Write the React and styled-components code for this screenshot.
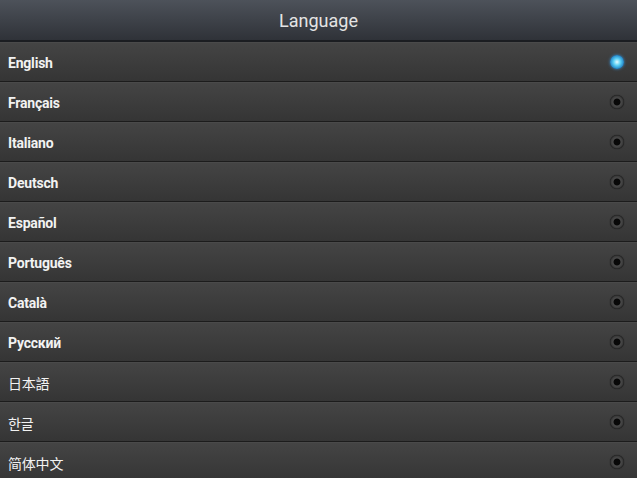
import styled, { createGlobalStyle } from "styled-components"

const GlobalStyle = createGlobalStyle`
  html, body {
    margin: 0;
    padding: 0;
    background: #2b2b2b;
    overflow: hidden;
  }
`

const languages = [
  "English",
  "Français",
  "Italiano",
  "Deutsch",
  "Español",
  "Português",
  "Català",
  "Русский",
  "日本語",
  "한글",
  "简体中文",
]

const Screen = styled.div`
  width: 637px;
  height: 478px;
  overflow: hidden;
  display: flex;
  flex-direction: column;
  font-family: "Liberation Sans Narrow", Roboto, "Noto Sans CJK SC", sans-serif;
  background: #222;
`

const Header = styled.header`
  height: 42px;
  flex-shrink: 0;
  display: flex;
  align-items: center;
  justify-content: center;
  box-sizing: border-box;
  padding-top: 1px;
  background: linear-gradient(#4d525a, #2f3238);
  border-bottom: 2px solid #1b1d21;
  color: #e4e4e4;
  font-size: 18px;
  font-weight: 400;
`

const List = styled.ul`
  list-style: none;
  margin: 0;
  padding: 0;
`

const Row = styled.li`
  height: 40px;
  display: flex;
  align-items: center;
  justify-content: space-between;
  padding: 1px 13px 0 8px;
  box-sizing: border-box;
  background: linear-gradient(#444444, #353535);
  border-top: 1px solid #4a4a4a;
  border-bottom: 1px solid #1c1c1c;
  color: #f2f2f2;
  font-size: 14px;
  letter-spacing: -0.2px;
  font-weight: ${({ $cjk }) => ($cjk ? 400 : 700)};
`

const Radio = styled.span`
  width: 14px;
  height: 14px;
  margin-bottom: 2px;
  border-radius: 50%;
  box-sizing: border-box;
  background: ${({ $on }) =>
    $on
      ? "radial-gradient(circle, #e6fbff 0%, #5cd0f5 35%, #1e7fc4 72%, #0d2a48 100%)"
      : "radial-gradient(circle, #080808 0%, #080808 30%, #4a4a4a 40%, #3a3a3a 60%, #101010 75%, #2a2a2a 100%)"};
  box-shadow: ${({ $on }) =>
    $on ? "0 0 3px #3a8fd0" : "0 0 1px #151515"};
`

export default function App() {
  return (
    <Screen>
      <GlobalStyle />
      <Header>Language</Header>
      <List>
        {languages.map((lang, i) => (
          <Row key={lang} $cjk={i > 7}>
            {lang}
            <Radio $on={i === 0} />
          </Row>
        ))}
      </List>
    </Screen>
  )
}
